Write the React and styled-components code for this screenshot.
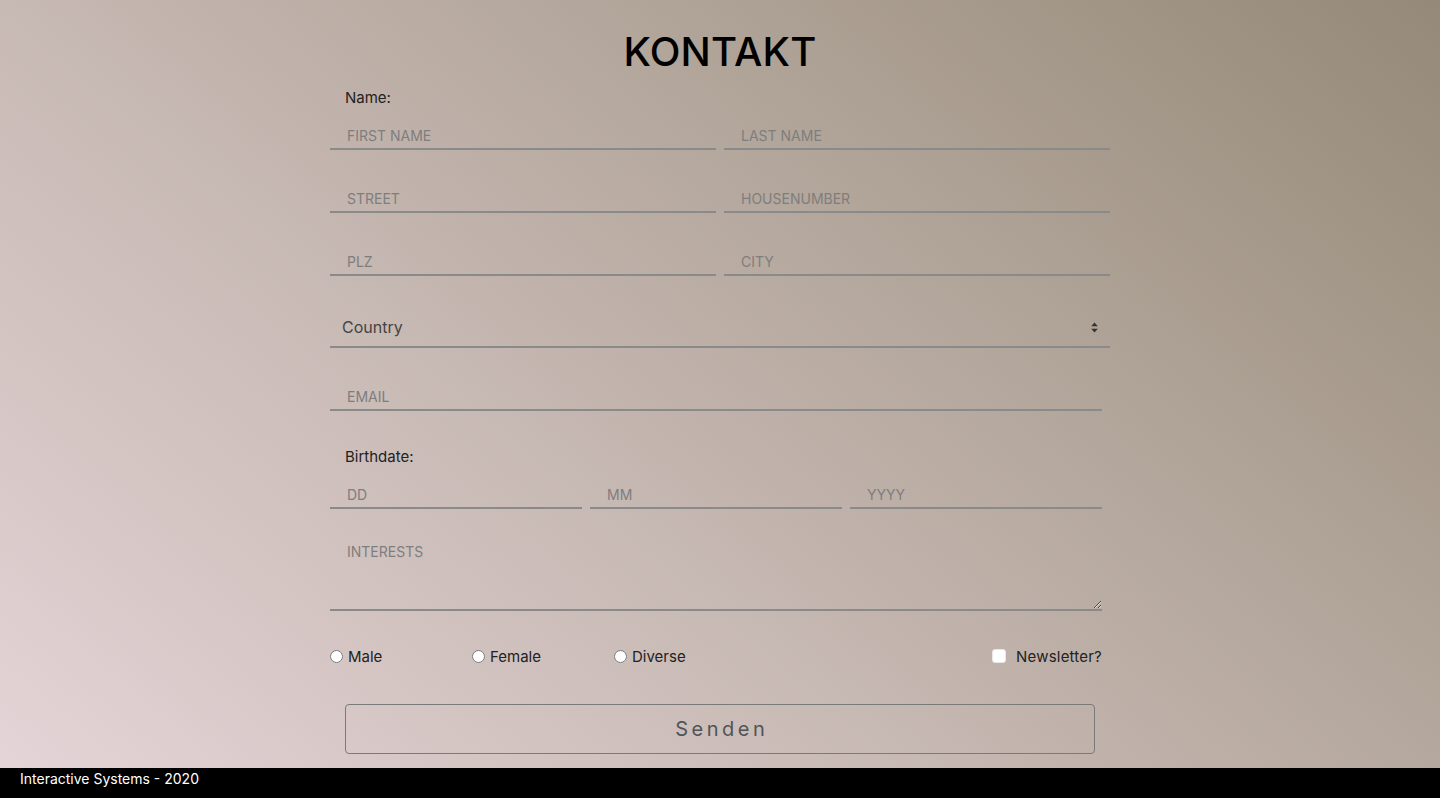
import React from "react";
import styled, { createGlobalStyle } from "styled-components";

const Global = createGlobalStyle`
  html, body { margin: 0; padding: 0; }
  body {
    font-family: Inter, "Noto Sans", "Liberation Sans", sans-serif;
    background: #000;
  }
  * { box-sizing: border-box; }
`;

const Page = styled.div`
  width: 1440px;
  height: 798px;
  display: flex;
  flex-direction: column;
  overflow: hidden;
`;

const Main = styled.main`
  flex: 1;
  background: linear-gradient(40deg, #e4d4d7 0%, #c6b8b2 40%, #958a78 100%);
  display: flex;
  justify-content: center;
`;

const Form = styled.form`
  width: 780px;
  display: flex;
  flex-direction: column;
`;

const Title = styled.h1`
  margin: 0;
  padding-top: 22px;
  height: 82px;
  line-height: 60px;
  text-align: center;
  font-size: 40px;
  font-weight: 500;
  letter-spacing: 0.2px;
  color: #000;
`;

const Label = styled.div`
  margin: ${(p) => p.$top || 6}px 0 6px 15px;
  height: 20px;
  line-height: 20px;
  font-size: 15px;
  color: #222;
`;

const Row = styled.div`
  display: flex;
  gap: 8px;
  width: ${(p) => p.$width || 780}px;
  margin-bottom: ${(p) => (p.$mb === undefined ? 27 : p.$mb)}px;
`;

const Input = styled.input`
  flex: 1;
  min-width: 0;
  height: 36px;
  padding: 8px 17px 0;
  border: none;
  border-bottom: 2px solid #8a8a8a;
  background: transparent;
  font-family: inherit;
  font-size: 14px;
  color: #333;
  outline: none;
  &::placeholder {
    color: #7e7e7e;
    text-transform: uppercase;
  }
`;

const SelectWrap = styled.div`
  position: relative;
  width: 780px;
  margin: 32px 0 27px;
`;

const Select = styled.select`
  width: 100%;
  height: 40px;
  padding: 0 12px;
  border: none;
  border-bottom: 2px solid #8a8a8a;
  background: transparent;
  appearance: none;
  -webkit-appearance: none;
  font-family: inherit;
  font-size: 16px;
  color: #444;
  outline: none;
`;

const Arrow = styled.svg`
  position: absolute;
  right: 12px;
  top: 14px;
  pointer-events: none;
`;

const TextArea = styled.textarea`
  width: 772px;
  height: 75px;
  padding: 8px 17px 0;
  border: none;
  border-bottom: 2px solid #8a8a8a;
  background: transparent;
  font-family: inherit;
  font-size: 14px;
  line-height: 16px;
  resize: vertical;
  outline: none;
  &::placeholder {
    color: #7e7e7e;
    text-transform: uppercase;
  }
`;

const Options = styled.div`
  width: 772px;
  margin-top: 35px;
  height: 20px;
  display: flex;
  align-items: center;
  justify-content: space-between;
`;

const RadioGroup = styled.div`
  display: flex;
`;

const Choice = styled.label`
  display: flex;
  align-items: center;
  width: ${(p) => (p.$width ? `${p.$width}px` : "auto")};
  gap: ${(p) => p.$gap || 5}px;
  font-size: 15px;
  letter-spacing: ${(p) => p.$ls || 0}px;
  color: #222;
  cursor: pointer;
  input[type="radio"] {
    margin: 0;
    width: 13px;
    height: 13px;
  }
`;

const Check = styled.input`
  appearance: none;
  -webkit-appearance: none;
  margin: 0;
  width: 14px;
  height: 14px;
  border-radius: 3px;
  background: #fff;
  border: 1px solid #e8e8e8;
`;

const Button = styled.button`
  margin: 38px 0 0 15px;
  width: 750px;
  height: 50px;
  padding: 0 0 0 3.5px;
  border: 1px solid #7a7a7a;
  border-radius: 4px;
  background: transparent;
  font-family: inherit;
  font-size: 20px;
  letter-spacing: 3.5px;
  color: #505458;
  cursor: pointer;
`;

const Footer = styled.footer`
  height: 30px;
  background: #000;
  color: #fff;
  font-size: 14px;
  line-height: 22px;
  padding: 0 20px;
`;

export default function App() {
  return (
    <>
      <Global />
      <Page>
        <Main>
          <Form onSubmit={(e) => e.preventDefault()}>
            <Title>KONTAKT</Title>
            <Label>Name:</Label>
            <Row>
              <Input placeholder="First Name" />
              <Input placeholder="Last Name" />
            </Row>
            <Row>
              <Input placeholder="Street" />
              <Input placeholder="Housenumber" />
            </Row>
            <Row $mb={0}>
              <Input placeholder="PLZ" />
              <Input placeholder="City" />
            </Row>
            <SelectWrap>
              <Select defaultValue="">
                <option value="">Country</option>
                <option value="de">Germany</option>
                <option value="at">Austria</option>
                <option value="ch">Switzerland</option>
              </Select>
              <Arrow width="7" height="11" viewBox="0 0 7 11">
                <path d="M3.5 0.5 L6.8 4.2 H0.2 Z" fill="#333" />
                <path d="M3.5 10.5 L6.8 6.8 H0.2 Z" fill="#333" />
              </Arrow>
            </SelectWrap>
            <Row $width={772} $mb={0}>
              <Input placeholder="Email" />
            </Row>
            <Label $top={36}>Birthdate:</Label>
            <Row $width={772}>
              <Input placeholder="DD" />
              <Input placeholder="MM" />
              <Input placeholder="YYYY" />
            </Row>
            <TextArea placeholder="Interests" />
            <Options>
              <RadioGroup>
                <Choice $width={142}>
                  <input type="radio" name="gender" /> Male
                </Choice>
                <Choice $width={142}>
                  <input type="radio" name="gender" /> Female
                </Choice>
                <Choice>
                  <input type="radio" name="gender" /> Diverse
                </Choice>
              </RadioGroup>
              <Choice $gap={10} $ls={0.2}>
                <Check type="checkbox" /> Newsletter?
              </Choice>
            </Options>
            <Button type="submit">Senden</Button>
          </Form>
        </Main>
        <Footer>Interactive Systems - 2020</Footer>
      </Page>
    </>
  );
}
